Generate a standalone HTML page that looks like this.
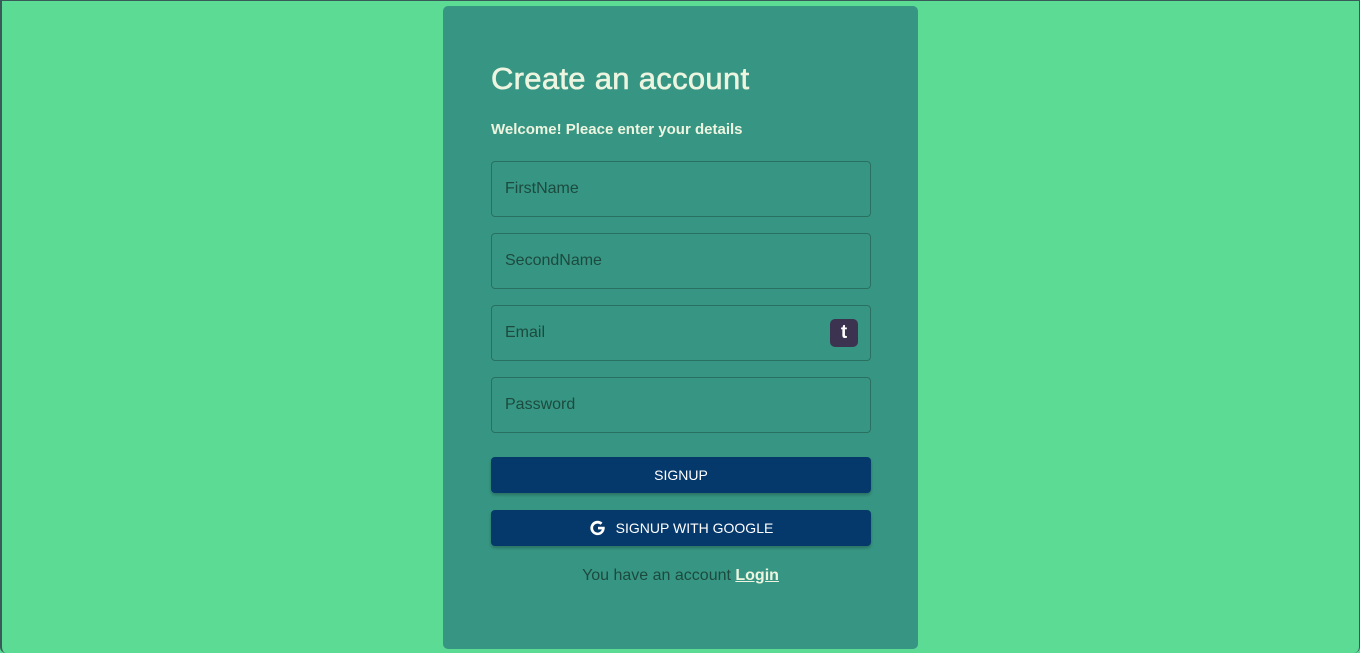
<!DOCTYPE html>
<html><head><style>
body{margin:0;width:1360px;height:653px;background:#5cdb95;overflow:hidden;font-family:"Liberation Sans",sans-serif;position:relative}
.frame{position:absolute;inset:0;border-left:2px solid #3a5a5a;border-top:1px solid #3a5a5a;border-right:1px solid #3a5a5a;border-radius:0 0 6px 6px;box-sizing:border-box}
.card{position:absolute;left:443px;top:6px;width:475px;height:643px;background:#379683;border-radius:5px}
h1{position:absolute;left:48px;top:55px;margin:0;font-size:31px;font-weight:normal;color:#edf5e1;-webkit-text-stroke:0.6px #edf5e1;letter-spacing:0.3px}
.sub{position:absolute;left:48px;top:115px;font-size:15px;font-weight:bold;color:#edf5e1}
.in{position:absolute;left:48px;width:378px;height:54px;border:1px solid #2a7060;border-radius:4px;font-size:16px;color:#1c4a3e}
.in span{position:absolute;left:13px;top:18px}
.t{position:absolute;right:12px;top:13px;width:28px;height:28px;background:#3c3350;border-radius:5px;color:#fff;font-weight:bold;font-size:19px;text-align:center;line-height:28px}
.btn{position:absolute;left:48px;width:380px;height:36px;background:#05386b;border-radius:4px;color:#fff;font-size:14px;text-align:center;line-height:36px;box-shadow:0 2px 3px rgba(0,0,0,0.25)}
.foot{position:absolute;left:0;width:475px;top:561px;text-align:center;font-size:16px;color:#1c4a3e}
.foot b{color:#edf5e1;text-decoration:underline}
</style></head><body>
<div class="frame"></div>
<div class="card">
<h1>Create an account</h1>
<div class="sub">Welcome! Pleace enter your details</div>
<div class="in" style="top:155px"><span>FirstName</span></div>
<div class="in" style="top:227px"><span>SecondName</span></div>
<div class="in" style="top:299px"><span>Email</span><div class="t">t</div></div>
<div class="in" style="top:371px"><span>Password</span></div>
<div class="btn" style="top:451px">SIGNUP</div>
<div class="btn" style="top:504px"><svg width="18" height="18" viewBox="0 0 24 24" style="vertical-align:-4px;margin-right:9px"><path d="M21 12.2c0-.7-.1-1.3-.2-1.9H12v3.6h5.1a4.5 4.5 0 0 1-1.9 2.9 6 6 0 1 1 .2-9.2l2.6-2.6A9.6 9.6 0 1 0 21 12.2z" fill="#fff"/></svg>SIGNUP WITH GOOGLE</div>
<div class="foot">You have an account <b>Login</b></div>
</div>
</body></html>
